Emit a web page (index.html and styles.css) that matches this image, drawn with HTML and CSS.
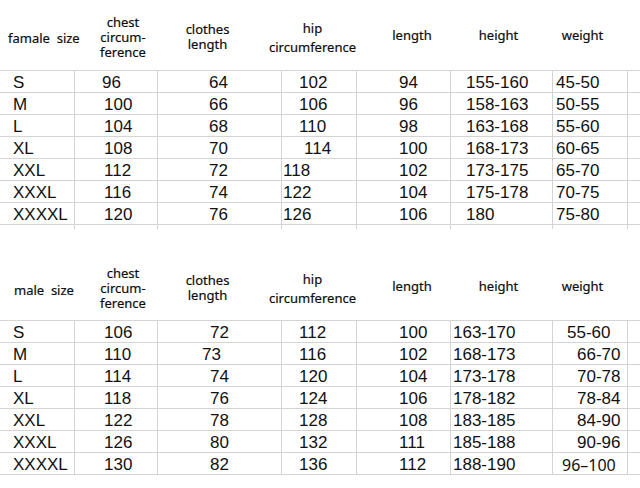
FILE: index.html
```html
<!DOCTYPE html>
<html lang="en">
<head>
<meta charset="utf-8">
<title>Size chart</title>
<link rel="stylesheet" href="styles.css">
</head>
<body>
<main class="sheet">
  <section class="chart female">
    <div class="head">
      <div class="h h-size">famale&nbsp; size</div>
      <div class="h h-chest"><span>chest</span><span>circum-</span><span>ference</span></div>
      <div class="h h-clothes"><span>clothes</span><span>length</span></div>
      <div class="h h-hip"><span>hip</span><span class="sub">circumference</span></div>
      <div class="h h-len">length</div>
      <div class="h h-height">height</div>
      <div class="h h-weight">weight</div>
      <div class="h"></div>
    </div>
    <div class="rows">
      <div class="c sz">S</div><div class="c ch n2">96</div><div class="c cl">64</div><div class="c hp">102</div><div class="c ln">94</div><div class="c ht">155-160</div><div class="c wt">45-50</div><div class="c end"></div>
      <div class="c sz">M</div><div class="c ch">100</div><div class="c cl">66</div><div class="c hp">106</div><div class="c ln">96</div><div class="c ht">158-163</div><div class="c wt">50-55</div><div class="c end"></div>
      <div class="c sz">L</div><div class="c ch">104</div><div class="c cl">68</div><div class="c hp">110</div><div class="c ln">98</div><div class="c ht">163-168</div><div class="c wt">55-60</div><div class="c end"></div>
      <div class="c sz">XL</div><div class="c ch">108</div><div class="c cl">70</div><div class="c hp hp-mid">114</div><div class="c ln">100</div><div class="c ht">168-173</div><div class="c wt">60-65</div><div class="c end"></div>
      <div class="c sz">XXL</div><div class="c ch">112</div><div class="c cl">72</div><div class="c hp hp-left">118</div><div class="c ln">102</div><div class="c ht">173-175</div><div class="c wt">65-70</div><div class="c end"></div>
      <div class="c sz">XXXL</div><div class="c ch">116</div><div class="c cl">74</div><div class="c hp hp-left">122</div><div class="c ln">104</div><div class="c ht">175-178</div><div class="c wt">70-75</div><div class="c end"></div>
      <div class="c sz">XXXXL</div><div class="c ch">120</div><div class="c cl">76</div><div class="c hp hp-left">126</div><div class="c ln">106</div><div class="c ht">180</div><div class="c wt">75-80</div><div class="c end"></div>
    </div>
    <div class="stub">
      <div class="s first"></div><div class="s"></div><div class="s"></div><div class="s"></div><div class="s"></div><div class="s"></div><div class="s"></div><div class="s"></div>
    </div>
  </section>

  <section class="chart male">
    <div class="head">
      <div class="h h-size">male&nbsp; size</div>
      <div class="h h-chest"><span>chest</span><span>circum-</span><span>ference</span></div>
      <div class="h h-clothes"><span>clothes</span><span>length</span></div>
      <div class="h h-hip"><span>hip</span><span class="sub">circumference</span></div>
      <div class="h h-len">length</div>
      <div class="h h-height">height</div>
      <div class="h h-weight">weight</div>
      <div class="h"></div>
    </div>
    <div class="rows">
      <div class="c sz">S</div><div class="c ch">106</div><div class="c cl">72</div><div class="c hp">112</div><div class="c ln">100</div><div class="c ht">163-170</div><div class="c wt">55-60</div><div class="c end"></div>
      <div class="c sz">M</div><div class="c ch">110</div><div class="c cl cl-off">73</div><div class="c hp">116</div><div class="c ln">102</div><div class="c ht">168-173</div><div class="c wt wt-far">66-70</div><div class="c end"></div>
      <div class="c sz">L</div><div class="c ch">114</div><div class="c cl">74</div><div class="c hp">120</div><div class="c ln">104</div><div class="c ht">173-178</div><div class="c wt wt-far">70-78</div><div class="c end"></div>
      <div class="c sz">XL</div><div class="c ch">118</div><div class="c cl">76</div><div class="c hp">124</div><div class="c ln">106</div><div class="c ht">178-182</div><div class="c wt wt-far">78-84</div><div class="c end"></div>
      <div class="c sz">XXL</div><div class="c ch">122</div><div class="c cl">78</div><div class="c hp">128</div><div class="c ln">108</div><div class="c ht">183-185</div><div class="c wt wt-far">84-90</div><div class="c end"></div>
      <div class="c sz">XXXL</div><div class="c ch">126</div><div class="c cl">80</div><div class="c hp">132</div><div class="c ln">111</div><div class="c ht">185-188</div><div class="c wt wt-far">90-96</div><div class="c end"></div>
      <div class="c sz">XXXXL</div><div class="c ch">130</div><div class="c cl">82</div><div class="c hp">136</div><div class="c ln">112</div><div class="c ht">188-190</div><div class="c wt wt-alt">96–100</div><div class="c end"></div>
    </div>
  </section>
</main>
</body>
</html>
```

FILE: styles.css
```css
* { box-sizing: border-box; }

html, body {
  margin: 0;
  padding: 0;
  background: #ffffff;
}

.sheet {
  width: 640px;
  height: 488px;
  overflow: hidden;
  color: #111;
}

.head,
.rows,
.stub {
  display: grid;
  grid-template-columns: 74px 83px 124px 75px 94px 102px 75px 1fr;
}

/* ---------- header ---------- */
.head {
  height: 70px;
  font-family: "Noto Sans", "Open Sans", sans-serif;
  font-size: 13px;
  line-height: 15px;
  color: #0d0d0d;
  -webkit-text-stroke: 0.2px #0d0d0d;
}

.male .head { padding-top: 1px; }

.h {
  display: flex;
  flex-direction: column;
  align-items: center;
  white-space: nowrap;
  padding-top: 28px;
}

.h-size {
  align-items: flex-start;
  padding-top: 31px;
  padding-left: 8px;
}
.male .h-size { padding-left: 14px; padding-top: 32px; }

.h-chest { padding-top: 15px; padding-left: 15px; }
.h-clothes { padding-top: 22px; padding-right: 23px; }
.h-hip { padding-top: 21px; padding-right: 12px; }
.h-hip .sub { margin-top: 4px; }
.h-len { padding-left: 18px; }
.h-height { padding-right: 5px; }
.h-weight { padding-right: 14px; }

/* ---------- body rows ---------- */
.rows {
  grid-auto-rows: 22px;
  border-top: 1px solid #d4d4d4;
  font-family: "Liberation Sans", Arial, sans-serif;
  font-size: 17px;
}

.c {
  border-bottom: 1px solid #d4d4d4;
  border-left: 1px solid #d4d4d4;
  padding-top: 2px;
  line-height: 20px;
  white-space: nowrap;
}

.c.sz { border-left: none; padding-left: 13px; }
.c.ch { padding-left: 29px; }
.c.ch.n2 { padding-left: 27px; }
.c.cl { padding-left: 51px; }
.male .c.cl { padding-left: 52px; }
.male .c.cl.cl-off { padding-left: 44px; }
.c.hp { padding-left: 17px; }
.c.hp.hp-mid { padding-left: 22px; }
.c.hp.hp-left { padding-left: 1px; }
.c.ln { padding-left: 42px; }
.c.ht { padding-left: 15px; }
.male .c.ht { padding-left: 2px; }
.c.wt { padding-left: 3px; }
.male .c.wt { padding-left: 14px; }
.male .c.wt.wt-far { padding-left: 24px; }
.male .c.wt.wt-alt {
  padding-left: 9px;
  font-family: "Noto Sans", sans-serif;
  font-size: 16px;
}

/* short tails of the column rules under the first table */
.stub {
  height: 4px;
  margin-bottom: 21px;
}
.s { border-left: 1px solid #d4d4d4; }
.s.first { border-left: none; }
```
